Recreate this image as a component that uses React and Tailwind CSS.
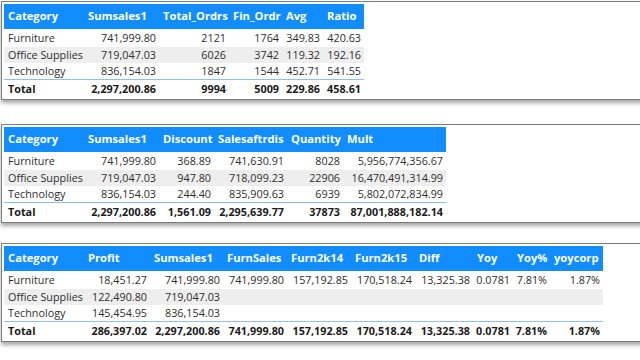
const tables = [
  {
    mt: 'mt-[1px]',
    width: 'w-[360px]',
    cols: [
      { name: 'Category', w: 'w-[80px]' },
      { name: 'Sumsales1', w: 'w-[75px]' },
      { name: 'Total_Ordrs', w: 'w-[70px]' },
      { name: 'Fin_Ordr', w: 'w-[53px]' },
      { name: 'Avg', w: 'w-[41px]' },
      { name: 'Ratio', w: 'w-[41px]' },
    ],
    rows: [
      ['Furniture', '741,999.80', '2121', '1764', '349.83', '420.63'],
      ['Office Supplies', '719,047.03', '6026', '3742', '119.32', '192.16'],
      ['Technology', '836,154.03', '1847', '1544', '452.71', '541.55'],
    ],
    total: ['Total', '2,297,200.86', '9994', '5009', '229.86', '458.61'],
  },
  {
    mt: 'mt-[24px]',
    width: 'w-[442px]',
    cols: [
      { name: 'Category', w: 'w-[80px]' },
      { name: 'Sumsales1', w: 'w-[75px]' },
      { name: 'Discount', w: 'w-[55px]' },
      { name: 'Salesaftrdis', w: 'w-[73px]' },
      { name: 'Quantity', w: 'w-[56px]' },
      { name: 'Mult', w: 'w-[103px]' },
    ],
    rows: [
      ['Furniture', '741,999.80', '368.89', '741,630.91', '8028', '5,956,774,356.67'],
      ['Office Supplies', '719,047.03', '947.80', '718,099.23', '22906', '16,470,491,314.99'],
      ['Technology', '836,154.03', '244.40', '835,909.63', '6939', '5,802,072,834.99'],
    ],
    total: ['Total', '2,297,200.86', '1,561.09', '2,295,639.77', '37873', '87,001,888,182.14'],
  },
  {
    mt: 'mt-[20px]',
    width: 'w-[599px]',
    cols: [
      { name: 'Category', w: 'w-[80px]' },
      { name: 'Profit', w: 'w-[66px]' },
      { name: 'Sumsales1', w: 'w-[73px]' },
      { name: 'FurnSales', w: 'w-[64px]' },
      { name: 'Furn2k14', w: 'w-[64px]' },
      { name: 'Furn2k15', w: 'w-[64px]' },
      { name: 'Diff', w: 'w-[58px]' },
      { name: 'Yoy', w: 'w-[40px]' },
      { name: 'Yoy%', w: 'w-[37px]' },
      { name: 'yoycorp', w: 'w-[53px]' },
    ],
    rows: [
      ['Furniture', '18,451.27', '741,999.80', '741,999.80', '157,192.85', '170,518.24', '13,325.38', '0.0781', '7.81%', '1.87%'],
      ['Office Supplies', '122,490.80', '719,047.03', '', '', '', '', '', '', ''],
      ['Technology', '145,454.95', '836,154.03', '', '', '', '', '', '', ''],
    ],
    total: ['Total', '286,397.02', '2,297,200.86', '741,999.80', '157,192.85', '170,518.24', '13,325.38', '0.0781', '7.81%', '1.87%'],
  },
];

function Row({ cols, cells, className, bold }) {
  return (
    <div className={`flex ${className}`}>
      {cols.map((c, i) => (
        <div
          key={c.name}
          className={`${c.w} shrink-0 flex items-center whitespace-nowrap ${i === 0 ? 'pl-[4px] justify-start' : 'pr-[3px] justify-end'} ${bold ? 'font-bold text-[#1b1b1b]' : 'text-[#2e2e2e]'}`}
        >
          {cells[i]}
        </div>
      ))}
    </div>
  );
}

function Panel({ t }) {
  return (
    <div className={`${t.mt} ml-[1px] w-[680px] bg-white border border-[#7d7d7d] shadow-[0_3px_4px_rgba(0,0,0,0.35)] px-[2px] pt-[2px] pb-[1px]`}>
      <div className={`${t.width} text-[10.8px] leading-none`}>
        <div className="flex h-[25px] bg-[#118dff]">
          {t.cols.map((c) => (
            <div key={c.name} className={`${c.w} shrink-0 pl-[4px] pb-[2px] flex items-center whitespace-nowrap text-white font-bold text-[11.2px]`}>
              {c.name}
            </div>
          ))}
        </div>
        <Row cols={t.cols} cells={t.rows[0]} className="h-[18px] pt-[1px]" />
        <Row cols={t.cols} cells={t.rows[1]} className="h-[16px] bg-[#eeeeee]" />
        <Row cols={t.cols} cells={t.rows[2]} className="h-[16px]" />
        <div className="h-px bg-[#8fc0ee]" />
        <Row cols={t.cols} cells={t.total} className="h-[18px]" bold />
      </div>
    </div>
  );
}

export default function App() {
  return (
    <div className="w-[640px] h-[360px] overflow-hidden bg-white font-['Open_Sans',sans-serif]">
      {tables.map((t, i) => (
        <Panel key={i} t={t} />
      ))}
    </div>
  );
}
